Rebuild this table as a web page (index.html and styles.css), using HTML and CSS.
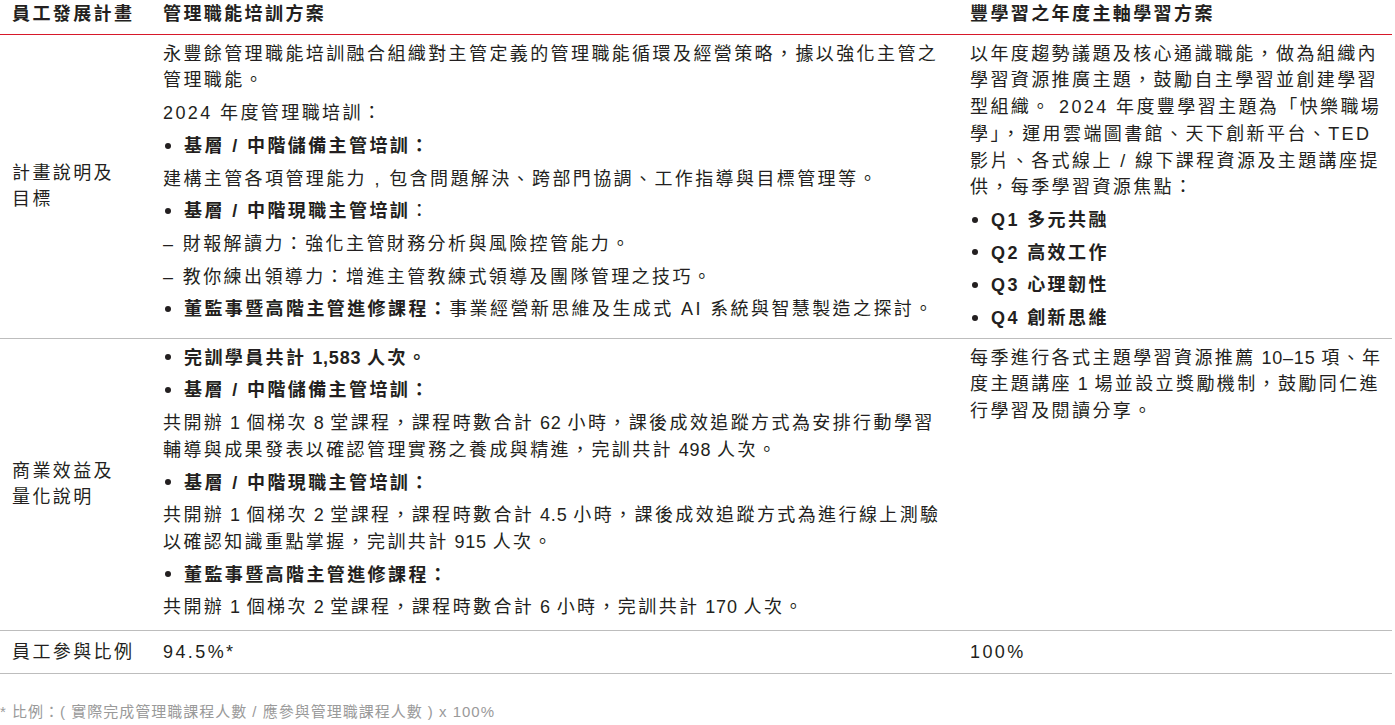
FILE: index.html
```html
<!DOCTYPE html>
<html lang="zh-Hant">
<head>
<meta charset="utf-8">
<title>員工發展計畫</title>
<link rel="stylesheet" href="styles.css">
</head>
<body>
<div class="table">
  <div class="row head">
    <div class="cell c1">員工發展計畫</div>
    <div class="cell c2">管理職能培訓方案</div>
    <div class="cell c3">豐學習之年度主軸學習方案</div>
  </div>
  <div class="row">
    <div class="cell c1 label">計畫說明及<br>目標</div>
    <div class="cell c2">
      <p>永豐餘管理職能培訓融合組織對主管定義的管理職能循環及經營策略，據以強化主管之管理職能。</p>
      <p>2024 年度管理職培訓：</p>
      <p class="bullet"><b>基層 / 中階儲備主管培訓：</b></p>
      <p>建構主管各項管理能力 , 包含問題解決、跨部門協調、工作指導與目標管理等。</p>
      <p class="bullet"><b>基層 / 中階現職主管培訓</b>：</p>
      <p>– 財報解讀力：強化主管財務分析與風險控管能力。</p>
      <p>– 教你練出領導力：增進主管教練式領導及團隊管理之技巧。</p>
      <p class="bullet"><b>董監事暨高階主管進修課程：</b>事業經營新思維及生成式 AI 系統與智慧製造之探討。</p>
    </div>
    <div class="cell c3">
      <p>以年度趨勢議題及核心通識職能，做為組織內學習資源推廣主題，鼓勵自主學習並創建學習型組織。 2024 年度豐學習主題為「快樂職場學」，運用雲端圖書館、天下創新平台、TED 影片、各式線上 / 線下課程資源及主題講座提供，每季學習資源焦點：</p>
      <p class="bullet"><b>Q1 多元共融</b></p>
      <p class="bullet"><b>Q2 高效工作</b></p>
      <p class="bullet"><b>Q3 心理韌性</b></p>
      <p class="bullet"><b>Q4 創新思維</b></p>
    </div>
  </div>
  <div class="row r2">
    <div class="cell c1 label">商業效益及<br>量化說明</div>
    <div class="cell c2">
      <p class="bullet"><b>完訓學員共計<span class="n"> 1,583 </span>人次。</b></p>
      <p class="bullet"><b>基層 / 中階儲備主管培訓：</b></p>
      <p>共開辦<span class="n"> 1 </span>個梯次<span class="n"> 8 </span>堂課程，課程時數合計<span class="n"> 62 </span>小時，課後成效追蹤方式為安排行動學習輔導與成果發表以確認管理實務之養成與精進，完訓共計<span class="n"> 498 </span>人次。</p>
      <p class="bullet"><b>基層 / 中階現職主管培訓：</b></p>
      <p>共開辦<span class="n"> 1 </span>個梯次<span class="n"> 2 </span>堂課程，課程時數合計<span class="n"> 4.5 </span>小時，課後成效追蹤方式為進行線上測驗以確認知識重點掌握，完訓共計<span class="n"> 915 </span>人次。</p>
      <p class="bullet"><b>董監事暨高階主管進修課程：</b></p>
      <p>共開辦<span class="n"> 1 </span>個梯次<span class="n"> 2 </span>堂課程，課程時數合計<span class="n"> 6 </span>小時，完訓共計<span class="n"> 170 </span>人次。</p>
    </div>
    <div class="cell c3">
      <p>每季進行各式主題學習資源推薦<span class="n"> 10–15 </span>項、年度主題講座<span class="n"> 1 </span>場並設立獎勵機制，鼓勵同仁進行學習及閱讀分享。</p>
    </div>
  </div>
  <div class="row r3">
    <div class="cell c1">員工參與比例</div>
    <div class="cell c2">94.5%*</div>
    <div class="cell c3">100%</div>
  </div>
</div>
<p class="note">* 比例：( 實際完成管理職課程人數 / 應參與管理職課程人數 ) x 100%</p>
</body>
</html>
```

FILE: styles.css
```css
html, body {
  margin: 0;
  padding: 0;
  background: #ffffff;
}
body {
  font-family: "Liberation Sans", "Noto Sans CJK TC", sans-serif;
  color: #231f20;
  font-size: 18px;
  line-height: 26.7px;
  letter-spacing: 2.4px;
}
.table {
  width: 1392px;
}
.row {
  display: grid;
  grid-template-columns: 151px 807px 1fr;
  border-bottom: 1px solid #bdbdbd;
}
.row.head {
  border-bottom: 1px solid #d7182a;
  font-weight: 700;
}
.cell {
  padding: 6px 0 6px 12px;
}
.cell.c2 {
  padding-right: 3px;
}
.head .cell {
  padding-top: 1px;
  padding-bottom: 6px;
}
.label {
  align-self: center;
  padding-top: 0;
  padding-bottom: 0;
}
.r2 .cell.c2, .r2 .cell.c3 {
  padding-top: 6px;
  padding-bottom: 9px;
}
.r3 .cell {
  padding-top: 8px;
  padding-bottom: 7px;
}
p {
  margin: 0 0 6px 0;
}
p:last-child {
  margin-bottom: 0;
}
.bullet::before {
  content: "";
  display: inline-block;
  width: 6px;
  height: 6px;
  border-radius: 50%;
  background: #231f20;
  margin: 0 13px 3px 2px;
  vertical-align: middle;
}
b {
  font-weight: 700;
}
.n {
  letter-spacing: 0.8px;
}
.note {
  margin: 26px 0 0 0;
  font-size: 15px;
  line-height: 24px;
  letter-spacing: 1px;
  color: #9a9a9a;
}
```
